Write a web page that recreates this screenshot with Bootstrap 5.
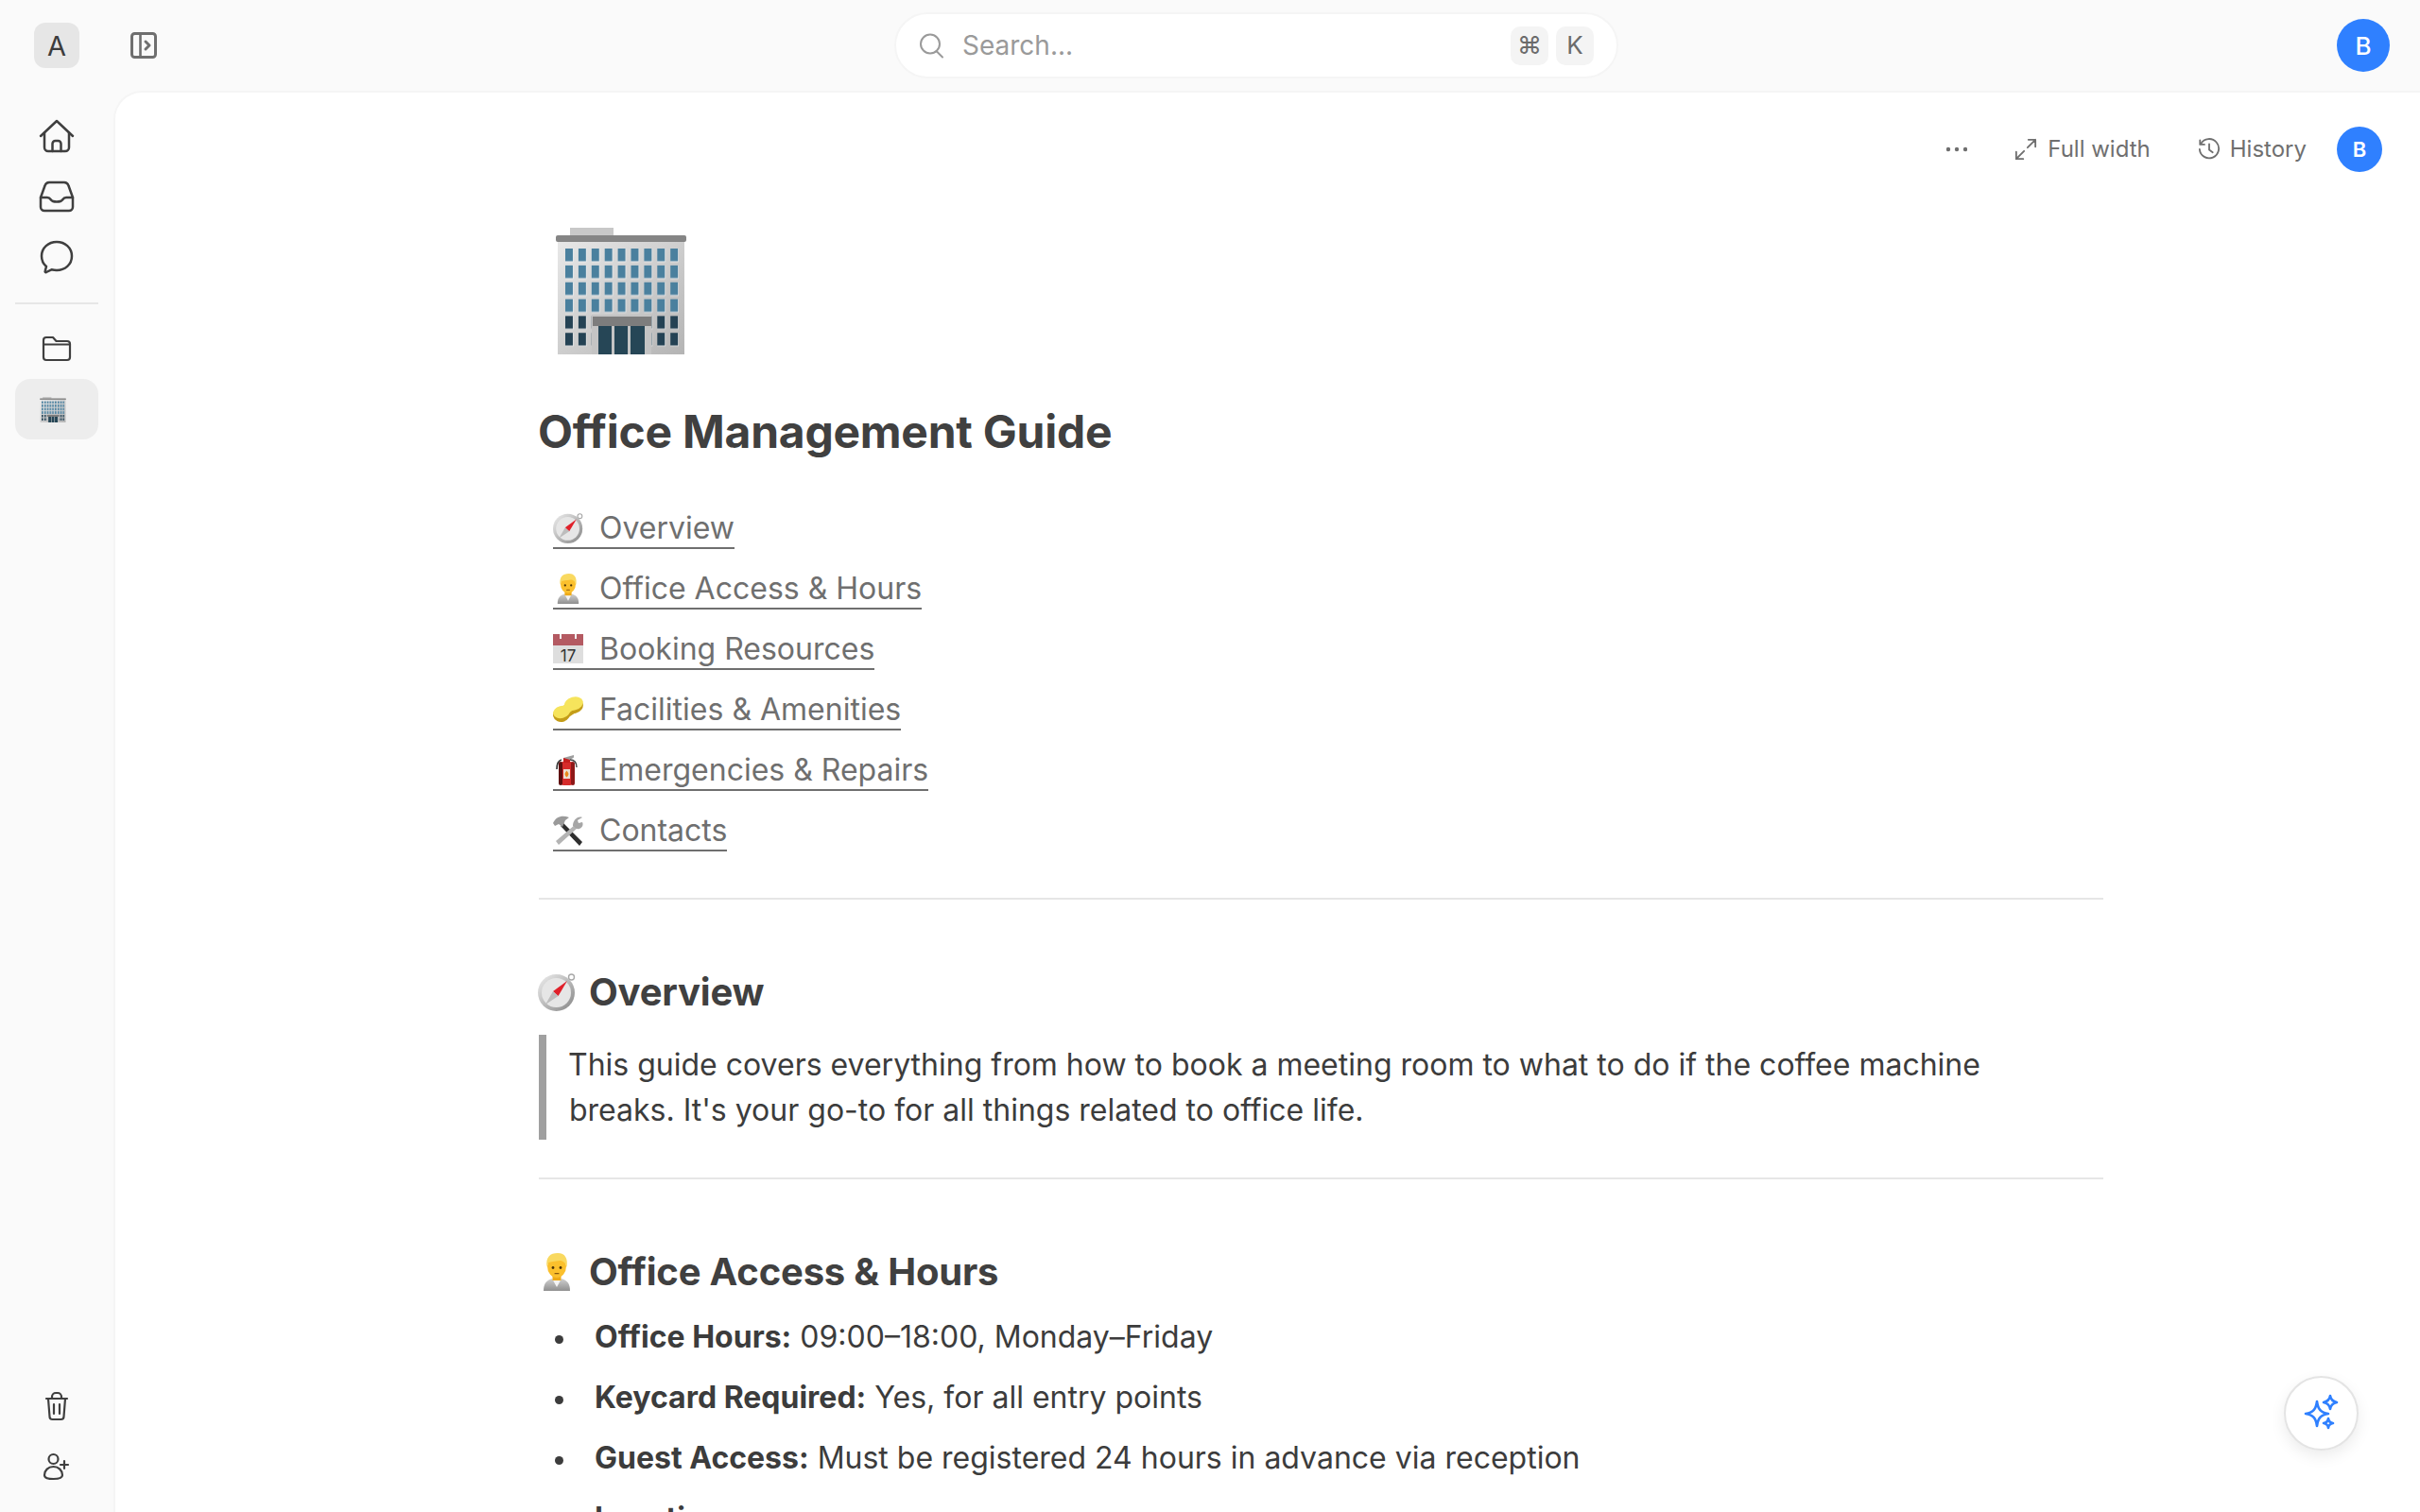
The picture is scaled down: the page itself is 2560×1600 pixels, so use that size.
<!doctype html>
<html lang="en">
<head>
<meta charset="utf-8">
<title>Office Management Guide</title>
<link href="https://cdn.jsdelivr.net/npm/bootstrap@5.3.0/dist/css/bootstrap.min.css" rel="stylesheet">
<style>
html,body{height:100%}
body{font-family:Inter,"Liberation Sans",sans-serif;background:#fafafa;color:#3c3c3c;overflow:hidden}
.shell{height:100vh}
.topbar{height:96px;flex:none;position:relative}
.brand-zone{width:120px;flex:none}
.brand-tile{width:48px;height:48px;border-radius:12px;background:#e6e6e6;color:#3c3c3c;font-size:29px;line-height:1}
.toggle-zone{width:60px;flex:none;padding-left:12px}
.searchbox{position:absolute;left:946px;top:13px;width:766px;height:70px;border-radius:35px;background:#fff;border:2px solid #f5f5f5;padding:0 24px}
.searchbox .ph{color:#9a9a9a;font-size:28px;margin-left:18px}
.kbd-tile{width:40px;height:41px;border-radius:10px;background:#f4f4f4;color:#6b6b6b;font-size:26px;line-height:1}
.avatar-big{width:56px;height:56px;border-radius:50%;background:#2f80ff;color:#fff;font-size:26px;font-weight:500;margin-left:auto;margin-right:32px}
.body-row{flex:1;min-height:0}
.rail{width:120px;flex:none;padding-top:16px;padding-bottom:16px}
.rail-btn{width:88px;height:64px;border-radius:16px}
.rail-btn.active{background:#ededed}
.rail-rule{width:88px;height:2px;background:#e6e6e6;margin:16px 0 15px}
.panel{flex:1;min-width:0;background:#fff;border-top-left-radius:30px;border-top:2px solid #f5f5f5;border-left:2px solid #f5f5f5;overflow:hidden;position:relative}
.toolrow{height:48px;margin-top:36px;padding-right:40px;color:#6f6f6f;font-size:24px}
.toolrow .dots{margin-right:50px}
.toolrow .fullw{margin-right:50px;gap:11px}
.toolrow .hist{margin-right:32px;gap:10px}
.avatar-small{width:48px;height:48px;border-radius:50%;background:#2f80ff;color:#fff;font-size:22px;font-weight:600}
.doc{width:1656px;margin-left:447px}
.doc-icon{display:block;margin:59px 0 0 19px}
.doc-title{font-size:48px;line-height:58px;font-weight:700;color:#404040;margin:53px 0 0;letter-spacing:-.25px}
.toc{margin-top:52px}
.toc-row{height:64px;padding-left:16px}
.toc-link{color:#6f6f6f;font-size:32px;line-height:43px;text-decoration:none;border-bottom:2px solid #6f6f6f;height:43px;gap:17px}
.doc-rule{border:0;height:2px;background:#e6e6e6;opacity:1;margin:0 0 0 1px}
.r-one{margin-top:28px}
.r-two{margin-top:40px}
.sec-title{font-size:40px;line-height:48px;font-weight:700;color:#404040;margin:0;gap:14px;letter-spacing:-.2px}
.sec-one{margin-top:74px}
.sec-two{margin-top:74px}
.note{border-left:8px solid #a0a0a0;padding:8px 24px;margin:21px 0 0 1px;font-size:32px;line-height:47.6px;color:#3c3c3c;text-indent:-1px}
.note::first-line{color:inherit}
.facts{margin:13px 0 0;padding-left:60px;font-size:32px;line-height:64px;color:#3c3c3c;list-style:none}
.facts li::before{content:"";display:inline-block;width:9px;height:9px;border-radius:50%;background:#3c3c3c;margin-left:-42px;margin-right:33px;vertical-align:middle}
.facts strong{font-weight:700}
.ai-btn{position:absolute;left:2416px;top:1456px;width:79px;height:79px;border-radius:50%;background:#fff;border:2px solid #e4e4e4;box-shadow:0 6px 16px rgba(0,0,0,.08)}
</style>
</head>
<body>
<svg width="0" height="0" class="d-block" aria-hidden="true">
<defs>
<linearGradient id="wall" x1="0" y1="0" x2="1" y2="1"><stop offset="0" stop-color="#e8e8e8"/><stop offset="1" stop-color="#b4b4b4"/></linearGradient>
<linearGradient id="steel" x1="0" y1="0" x2="1" y2="1"><stop offset="0" stop-color="#f0f0f0"/><stop offset="1" stop-color="#858585"/></linearGradient>
<linearGradient id="jacket" x1="0" y1="0" x2="0" y2="1"><stop offset="0" stop-color="#d0d0d0"/><stop offset="1" stop-color="#8f8f8f"/></linearGradient>
<pattern id="winA" x="10" y="22" width="13.9" height="17.85" patternUnits="userSpaceOnUse"><rect x="-.8" y="-.8" width="9.4" height="15" fill="#f4f4f4"/><rect width="8" height="13.4" fill="#4a809e"/></pattern>
<pattern id="winB" x="10" y="22" width="13.9" height="17.85" patternUnits="userSpaceOnUse"><rect x="-.8" y="-.8" width="9.4" height="15" fill="#f4f4f4"/><rect width="8" height="13.4" fill="#244254"/></pattern>
<symbol id="e-building" viewBox="0 0 138 134">
<rect x="15" y="0" width="46" height="10" fill="#c8c8c8"/>
<rect x="2" y="14" width="134" height="120" fill="url(#wall)"/>
<rect x="0" y="8" width="138" height="7" rx="2" fill="#858585"/>
<rect x="9" y="21" width="121" height="71" fill="url(#winA)"/>
<rect x="9" y="92" width="121" height="36" fill="url(#winB)"/>
<rect x="38" y="92" width="63" height="42" fill="#c4c4c4"/>
<rect x="39" y="94" width="62" height="10" fill="#7d7d7d"/>
<rect x="45" y="104" width="14" height="30" fill="#264656"/><rect x="62" y="104" width="14" height="30" fill="#264656"/><rect x="79" y="104" width="15" height="30" fill="#264656"/>
</symbol>
<symbol id="e-compass" viewBox="0 0 40 40">
<circle cx="35.500" cy="4" r="3" fill="none" stroke="#a8a8a8" stroke-width="1.400"/>
<circle cx="19.500" cy="20.500" r="19.500" fill="url(#steel)"/>
<circle cx="19.500" cy="20.500" r="15.500" fill="#e6e6e6"/>
<path d="M31 8 L16 19 L21.500 24Z" fill="#e0202a"/>
<path d="M8 33 L16 19 L21.500 24Z" fill="#bdbdbd"/>
</symbol>
<symbol id="e-person" viewBox="0 0 40 40">
<path d="M6 40 C6 32 9 29 15 27 H25 C31 29 34 32 34 40Z" fill="url(#jacket)"/>
<path d="M15 27 L20 36 L25 27Z" fill="#f4f4f4"/>
<rect x="15.500" y="21" width="9" height="8" fill="#eeaa18"/>
<ellipse cx="20" cy="14" rx="10" ry="12" fill="#fbc02d"/>
<path d="M9.500 15 C8 4 13 0 21 0 C29 0 32 6 30.500 15 C29 10 27 8 23 8 C18 9 13 9 11.500 10 C10.500 11 10 13 9.500 15Z" fill="#f9d960"/>
<circle cx="16" cy="15.500" r="1.400" fill="#4a3208"/><circle cx="24" cy="15.500" r="1.400" fill="#4a3208"/>
<rect x="17.500" y="21" width="5" height="1.300" rx=".6" fill="#8a5a10"/>
</symbol>
<symbol id="e-calendar" viewBox="0 0 32 32">
<rect x="0" y="0" width="32" height="31" fill="#dedede"/>
<rect x="0" y="0" width="32" height="12" fill="#b45a62"/>
<rect x="7" y="0" width="2" height="5" fill="#f2f2f2"/><rect x="23" y="0" width="2" height="5" fill="#f2f2f2"/>
<text x="16" y="28.500" text-anchor="middle" font-family="Inter,sans-serif" font-size="17" fill="#333">17</text>
</symbol>
<symbol id="e-sponge" viewBox="0 0 32 32">
<g fill="#c49d18"><ellipse cx="9" cy="21" rx="9" ry="8" transform="rotate(-15 9 21)"/><ellipse cx="22" cy="12" rx="10" ry="8" transform="rotate(-15 22 12)"/><path d="M8 14 L20 6 L24 19 L12 27Z"/></g>
<g fill="#f6e45c"><ellipse cx="9" cy="18.500" rx="9" ry="6.500" transform="rotate(-15 9 18.500)"/><ellipse cx="22" cy="9.500" rx="10" ry="7" transform="rotate(-15 22 9.500)"/><path d="M8 14 L20 5 L23 15 L12 23Z"/></g>
</symbol>
<symbol id="e-extinguisher" viewBox="0 0 32 32">
<path d="M9 5 C5 6 4 9 4 15" fill="none" stroke="#333" stroke-width="1.600"/>
<rect x="6" y="7" width="17" height="25" rx="5" fill="#d62b2b"/>
<rect x="6" y="7" width="4" height="25" rx="2" fill="#5e1010"/>
<rect x="19" y="7" width="4" height="25" rx="2" fill="#8e1818"/>
<rect x="11" y="15" width="7" height="10" fill="#eadfd2"/>
<path d="M14.500 16.500 C16.500 19 17.500 20.500 14.500 23.500 C11.500 20.500 12.500 19 14.500 16.500Z" fill="#e98a1a"/>
<path d="M11 8 V3 H18 V8Z" fill="#c41f1f"/>
<path d="M11 3 L22 0 V2.500 L18 5Z" fill="#9e9e9e"/>
<path d="M18 5 C23 5 25 8 25 13" fill="none" stroke="#444" stroke-width="1.400"/>
</symbol>
<symbol id="e-tools" viewBox="0 0 32 32">
<path d="M11 8 L31 28 L28 32 L8 11Z" fill="#2e2e2e"/>
<path d="M0 8 C3 1 10 -1 17 2 L13 5 L10 12 L6 9 L2 11Z" fill="#9a9a9a"/>
<path d="M23 10 L3 27 L6 31 L26 13Z" fill="#b4b4b4"/>
<path d="M31 2 L26 5 L27 8 L31 7 C33 11 29 15 25 14 L21 11 C21 5 26 0 31 2Z" fill="#a6a6a6"/>
</symbol>
</defs>
</svg>

<div class="shell d-flex flex-column">
  <header class="topbar d-flex align-items-center">
    <div class="brand-zone d-flex justify-content-center"><div class="brand-tile d-flex align-items-center justify-content-center">A</div></div>
    <div class="toggle-zone d-flex">
      <svg width="40" height="40" viewBox="0 0 40 40" fill="none" stroke="#6f6f6f" stroke-width="3" stroke-linecap="round" stroke-linejoin="round"><rect x="7.500" y="7.500" width="25" height="25" rx="3"/><path d="M16.500 7.500V32.500" stroke-width="2.600"/><path d="M22 16l4 4-4 4"/></svg>
    </div>
    <div class="searchbox d-flex align-items-center">
      <svg width="28" height="28" viewBox="0 0 28 28" fill="none" stroke="#9a9a9a" stroke-width="2" stroke-linecap="round"><circle cx="12" cy="12.500" r="10"/><path d="M19 20.500l6 6"/></svg>
      <span class="ph">Search...</span>
      <div class="ms-auto d-flex gap-2">
        <span class="kbd-tile d-flex align-items-center justify-content-center">⌘</span>
        <span class="kbd-tile d-flex align-items-center justify-content-center">K</span>
      </div>
    </div>
    <div class="avatar-big d-flex align-items-center justify-content-center">B</div>
  </header>
  <div class="body-row d-flex">
    <aside class="rail d-flex flex-column align-items-center">
      <div class="d-flex flex-column align-items-center">
        <div class="rail-btn d-flex align-items-center justify-content-center">
          <svg width="40" height="40" viewBox="0 0 40 40" fill="none" stroke="#3f3f3f" stroke-width="2.500" stroke-linecap="round" stroke-linejoin="round"><path d="M3 20L20 4l17 16"/><path d="M7 16.500V32a4 4 0 0 0 4 4h18a4 4 0 0 0 4-4V16.500"/><path d="M15.500 36v-8a3 3 0 0 1 3-3h3a3 3 0 0 1 3 3v8"/></svg>
        </div>
        <div class="rail-btn d-flex align-items-center justify-content-center">
          <svg width="40" height="40" viewBox="0 0 40 40" fill="none" stroke="#3f3f3f" stroke-width="2.500" stroke-linecap="round" stroke-linejoin="round"><path d="M3 21v10a4 4 0 0 0 4 4h26a4 4 0 0 0 4-4V21L32.500 8.500A5 5 0 0 0 28 5H12a5 5 0 0 0-4.500 3.500Z"/><path d="M3 21h7c2 0 3 1 4 2.500 1 1.500 3 2 6 2s5-.5 6-2c1-1.500 2-2.500 4-2.500h7"/></svg>
        </div>
        <div class="rail-btn d-flex align-items-center justify-content-center">
          <svg width="40" height="40" viewBox="0 0 40 40" fill="none" stroke="#3f3f3f" stroke-width="2.500" stroke-linejoin="round"><path d="M20 4c8.600 0 16 6 16 15s-7.400 15-16 15c-2 0-3.500-.2-5.500-.7L9 36c-1 .4-1.600-.3-1.300-1.200L9 30c-3.500-3-5-7-5-11C4 10 11.400 4 20 4Z"/></svg>
        </div>
        <div class="rail-rule"></div>
        <div class="rail-btn d-flex align-items-center justify-content-center">
          <svg width="40" height="40" viewBox="0 0 40 40" fill="none" stroke="#3f3f3f" stroke-width="2.200" stroke-linejoin="round"><path d="M6 29V11a3 3 0 0 1 3-3h7l3.500 4H31a3 3 0 0 1 3 3v14a3 3 0 0 1-3 3H9a3 3 0 0 1-3-3Z"/><path d="M6 15.500h28" stroke-width="2"/></svg>
        </div>
        <div class="rail-btn active d-flex align-items-center justify-content-center">
          <svg width="28" height="27" class="me-2"><use href="#e-building"/></svg>
        </div>
      </div>
      <div class="mt-auto d-flex flex-column align-items-center">
        <div class="rail-btn d-flex align-items-center justify-content-center">
          <svg width="40" height="40" viewBox="0 0 40 40" fill="none" stroke="#3f3f3f" stroke-width="2.200" stroke-linecap="round" stroke-linejoin="round"><path d="M9 12h22"/><path d="M15 12v-2a4 4 0 0 1 4-4h2a4 4 0 0 1 4 4v2"/><path d="M11 12l1.500 19a3 3 0 0 0 3 3h9a3 3 0 0 0 3-3L29 12"/><path d="M17 18v10M23 18v10"/></svg>
        </div>
        <div class="rail-btn d-flex align-items-center justify-content-center">
          <svg width="40" height="40" viewBox="0 0 40 40" fill="none" stroke="#3f3f3f" stroke-width="2.200" stroke-linecap="round" stroke-linejoin="round"><circle cx="16.500" cy="12" r="5"/><path d="M7 29c0-5 4-9 9.500-9s9.500 4 9.500 9c0 3-4 4-9.500 4S7 32 7 29Z"/><path d="M28 14v8M24 18h8"/></svg>
        </div>
      </div>
    </aside>
    <main class="panel">
      <div class="toolrow d-flex align-items-center justify-content-end">
        <svg class="dots" width="22" height="6" viewBox="0 0 22 6" fill="#6f6f6f"><circle cx="2" cy="3" r="2.200"/><circle cx="11" cy="3" r="2.200"/><circle cx="20" cy="3" r="2.200"/></svg>
        <div class="fullw d-flex align-items-center">
          <svg width="24" height="24" viewBox="0 0 26 26" fill="none" stroke="#6f6f6f" stroke-width="2" stroke-linecap="round" stroke-linejoin="round"><path d="M15 11L24 2M16 2h8v8"/><path d="M11 15l-9 9M2 16v8h8"/></svg>
          <span>Full width</span>
        </div>
        <div class="hist d-flex align-items-center">
          <svg width="24" height="24" viewBox="0 0 26 26" fill="none" stroke="#6f6f6f" stroke-width="2" stroke-linecap="round" stroke-linejoin="round"><path d="M3.500 6.500A11 11 0 1 1 2 13"/><path d="M2.500 2.500v5h5"/><path d="M13 7v6.500l4 3"/></svg>
          <span>History</span>
        </div>
        <div class="avatar-small d-flex align-items-center justify-content-center">B</div>
      </div>
      <article class="doc">
        <svg class="doc-icon" width="138" height="134"><use href="#e-building"/></svg>
        <h1 class="doc-title">Office Management Guide</h1>
        <nav class="toc d-flex flex-column">
          <div class="toc-row"><a href="#" class="toc-link d-inline-flex align-items-center"><svg width="32" height="32"><use href="#e-compass"/></svg>Overview</a></div>
          <div class="toc-row"><a href="#" class="toc-link d-inline-flex align-items-center"><svg width="32" height="32"><use href="#e-person"/></svg>Office Access &amp; Hours</a></div>
          <div class="toc-row"><a href="#" class="toc-link d-inline-flex align-items-center"><svg width="32" height="32"><use href="#e-calendar"/></svg>Booking Resources</a></div>
          <div class="toc-row"><a href="#" class="toc-link d-inline-flex align-items-center"><svg width="32" height="32"><use href="#e-sponge"/></svg>Facilities &amp; Amenities</a></div>
          <div class="toc-row"><a href="#" class="toc-link d-inline-flex align-items-center"><svg width="32" height="32"><use href="#e-extinguisher"/></svg>Emergencies &amp; Repairs</a></div>
          <div class="toc-row"><a href="#" class="toc-link d-inline-flex align-items-center"><svg width="32" height="32"><use href="#e-tools"/></svg>Contacts</a></div>
        </nav>
        <hr class="doc-rule r-one">
        <h2 class="sec-title d-flex align-items-center sec-one"><svg width="40" height="40"><use href="#e-compass"/></svg>Overview</h2>
        <blockquote class="note">This guide covers everything from how to book a meeting room to what to do if the coffee machine breaks. It's your go-to for all things related to office life.</blockquote>
        <hr class="doc-rule r-two">
        <h2 class="sec-title d-flex align-items-center sec-two"><svg width="40" height="40"><use href="#e-person"/></svg>Office Access &amp; Hours</h2>
        <ul class="facts">
          <li><strong>Office Hours:</strong> 09:00–18:00, Monday–Friday</li>
          <li><strong>Keycard Required:</strong> Yes, for all entry points</li>
          <li><strong>Guest Access:</strong> Must be registered 24 hours in advance via reception</li>
          <li><strong>Location:</strong></li>
        </ul>
      </article>
    </main>
  </div>
</div>
<button type="button" class="ai-btn btn p-0 d-flex align-items-center justify-content-center" aria-label="AI">
  <svg width="48" height="48" viewBox="0 0 48 48" fill="none" stroke="#2f80ff" stroke-width="2.600" stroke-linejoin="round"><path d="M19 11c1 8 4 12 12 13-8 1-11 5-12 13-1-8-4-12-12-13 8-1 11-5 12-13Z"/><path d="M33 5c.6 4 2.500 6 7 7-4.500 1-6.400 3-7 7-.6-4-2.500-6-7-7 4.500-1 6.400-3 7-7Z"/><path d="M31 29c.4 3 1.600 4.500 5 5-3.400.5-4.600 2-5 5-.4-3-1.600-4.500-5-5 3.400-.5 4.600-2 5-5Z"/></svg>
</button>
</body>
</html>
